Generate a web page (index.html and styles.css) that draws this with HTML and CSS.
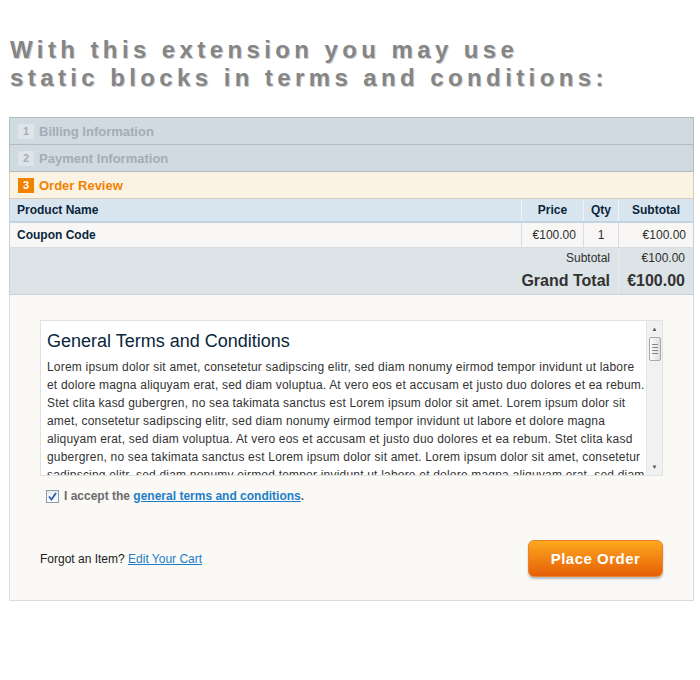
FILE: index.html
```html
<!DOCTYPE html>
<html lang="en">
<head>
  <meta charset="UTF-8" />
  <meta name="viewport" content="width=device-width, initial-scale=1.0"/>
  <title>Order Review</title>
  <link rel="stylesheet" href="styles.css">
</head>
<body>
  <div class="page">
    <h1 class="promo">With this extension you may use<br>static blocks in terms and conditions:</h1>

    <div class="checkout">
      <div class="step"><span class="step-num">1</span> Billing Information</div>
      <div class="step"><span class="step-num">2</span> Payment Information</div>
      <div class="step active"><span class="step-num">3</span> Order Review</div>

      <table class="review-table">
        <thead>
          <tr>
            <th class="col-name">Product Name</th>
            <th class="col-price">Price</th>
            <th class="col-qty">Qty</th>
            <th class="col-sub">Subtotal</th>
          </tr>
        </thead>
        <tbody>
          <tr>
            <td class="col-name"><strong>Coupon Code</strong></td>
            <td class="col-price">€100.00</td>
            <td class="col-qty">1</td>
            <td class="col-sub">€100.00</td>
          </tr>
        </tbody>
        <tfoot>
          <tr class="sub-row">
            <td colspan="3">Subtotal</td>
            <td>€100.00</td>
          </tr>
          <tr class="grand-row">
            <td colspan="3">Grand Total</td>
            <td>€100.00</td>
          </tr>
        </tfoot>
      </table>

      <div class="review-body">
        <div class="terms-box">
          <div class="terms-content">
            <h2>General Terms and Conditions</h2>
            <p>Lorem ipsum dolor sit amet, consetetur sadipscing elitr, sed diam nonumy eirmod tempor invidunt ut labore et dolore magna aliquyam erat, sed diam voluptua. At vero eos et accusam et justo duo dolores et ea rebum. Stet clita kasd gubergren, no sea takimata sanctus est Lorem ipsum dolor sit amet. Lorem ipsum dolor sit amet, consetetur sadipscing elitr, sed diam nonumy eirmod tempor invidunt ut labore et dolore magna aliquyam erat, sed diam voluptua. At vero eos et accusam et justo duo dolores et ea rebum. Stet clita kasd gubergren, no sea takimata sanctus est Lorem ipsum dolor sit amet. Lorem ipsum dolor sit amet, consetetur sadipscing elitr, sed diam nonumy eirmod tempor invidunt ut labore et dolore magna aliquyam erat, sed diam voluptua.</p>
          </div>
          <div class="scrollbar">
            <span class="arrow">&#9650;</span>
            <span class="thumb"><i></i><i></i><i></i><i></i></span>
            <span class="track"></span>
            <span class="arrow">&#9660;</span>
          </div>
        </div>

        <label class="agree">
          <span class="fake-check">
            <svg width="9" height="9" viewBox="0 0 9 9"><path d="M1 4.5 L3.5 7.5 L8 1" fill="none" stroke="#2b5fb4" stroke-width="1.8"/></svg>
          </span>
          <span class="agree-text">I accept the <a href="#">general terms and conditions</a>.</span>
        </label>

        <div class="review-footer">
          <p class="forgot">Forgot an Item? <a href="#">Edit Your Cart</a></p>
          <button class="place-order">Place Order</button>
        </div>
      </div>
    </div>
  </div>
</body>
</html>
```

FILE: styles.css
```css
:root {
  --step-bg: #d0dae1;
  --step-border: #b3bcc3;
  --step-text: #a4adb4;
  --active-bg: #faf2e3;
  --orange: #f18200;
  --head-bg: #d9e5ee;
  --navy: #0a263c;
  --row-bg: #f8f7f5;
  --cell-border: #d9dde3;
  --totals-bg: #dde4e7;
  --panel-bg: #faf9f6;
  --link: #1e7ec8;
}
body {
  margin: 0;
  font-family: 'Liberation Sans', Arial, sans-serif;
  font-size: 12px;
  color: #2f2f2f;
  background: #fff;
}
.page {
  padding: 36px 6px 0 9px;
}
.promo {
  margin: 0 0 25px 1px;
  font-size: 24px;
  line-height: 28px;
  font-weight: bold;
  letter-spacing: 4.4px;
  color: #858585;
  text-shadow: 1px 1px 0 #cfcfcf;
}
.checkout {
  width: 685px;
}
.step {
  display: flex;
  align-items: center;
  gap: 5px;
  height: 26px;
  padding-left: 8px;
  background: var(--step-bg);
  border: 1px solid var(--step-border);
  border-top: none;
  font-size: 13px;
  font-weight: bold;
  color: var(--step-text);
}
.step:first-child {
  border-top: 1px solid var(--step-border);
}
.step-num {
  display: inline-flex;
  align-items: center;
  justify-content: center;
  width: 16px;
  height: 15px;
  background: #dee5ea;
  font-size: 11px;
}
.step.active {
  background: var(--active-bg);
  border-color: #d6ccbb;
  color: var(--orange);
}
.step.active .step-num {
  background: var(--orange);
  color: #fff;
}
.review-table {
  width: 100%;
  border-collapse: collapse;
  border-left: 1px solid #c9d0d6;
  border-right: 1px solid #c9d0d6;
}
.review-table th {
  height: 22px;
  padding: 0 7px;
  background: var(--head-bg);
  color: var(--navy);
  font-weight: bold;
  text-align: left;
  border-bottom: 2px solid #c3d3df;
  border-left: 1px solid #eef3f7;
}
.review-table td {
  height: 24px;
  padding: 0 7px;
  background: var(--row-bg);
  border-left: 1px solid var(--cell-border);
  border-bottom: 1px solid var(--cell-border);
}
.review-table .col-name {
  border-left: none;
}
.review-table .col-price {
  width: 47px;
  text-align: right;
}
.review-table .col-qty {
  width: 20px;
  text-align: center;
}
.review-table .col-sub {
  width: 60px;
  text-align: right;
}
.review-table th.col-price,
.review-table th.col-sub {
  text-align: center;
}
.review-table td.col-name {
  color: var(--navy);
}
.review-table tfoot td {
  background: var(--totals-bg);
  text-align: right;
  border-bottom: none;
  border-left: 1px solid #e6ebee;
  padding: 0 8px;
}
.review-table tfoot td:first-child {
  border-left: none;
}
.sub-row td {
  height: 20px;
  padding-top: 1px;
}
.grand-row td {
  height: 26px;
  font-size: 16px;
  font-weight: bold;
  color: #333;
  vertical-align: middle;
  border-bottom: 1px solid #c9d0d6 !important;
}
.review-body {
  background: var(--panel-bg);
  border: 1px solid #d7dce0;
  border-top: none;
  padding: 25px 30px 23px 30px;
}
.terms-box {
  display: flex;
  height: 154px;
  background: #fff;
  border: 1px solid #e1e1e1;
}
.terms-content {
  flex: 1;
  overflow: hidden;
  padding: 9px 0 0 6px;
}
.terms-content h2 {
  margin: 0 0 6px;
  font-size: 18px;
  line-height: 22px;
  font-weight: normal;
  color: var(--navy);
}
.terms-content p {
  margin: 0;
  line-height: 18px;
  letter-spacing: 0.2px;
  color: #333;
}
.scrollbar {
  display: flex;
  flex-direction: column;
  align-items: center;
  width: 15px;
  background: #f1f1f1;
  border-left: 1px solid #e6e6e6;
}
.scrollbar .arrow {
  height: 16px;
  line-height: 16px;
  font-size: 6px;
  color: #555;
}
.scrollbar .thumb {
  display: flex;
  flex-direction: column;
  justify-content: center;
  align-items: center;
  gap: 2px;
  width: 12px;
  height: 24px;
  background: linear-gradient(to right, #fdfdfd, #dcdcdc);
  border: 1px solid #a9a9a9;
  border-radius: 2px;
  box-sizing: border-box;
}
.scrollbar .thumb i {
  display: block;
  width: 6px;
  height: 1px;
  background: #888;
}
.scrollbar .track {
  flex: 1;
}
.agree {
  display: flex;
  align-items: center;
  gap: 5px;
  margin: 13px 0 0 6px;
  font-weight: bold;
  color: #6b6b6b;
}
.agree a {
  color: var(--link);
  text-decoration: underline;
}
.fake-check {
  display: inline-flex;
  align-items: center;
  justify-content: center;
  width: 11px;
  height: 11px;
  border: 1px solid #8e9aa5;
  background: linear-gradient(#e6ebf0, #fff);
}
.review-footer {
  display: flex;
  justify-content: space-between;
  align-items: center;
  margin-top: 37px;
}
.forgot {
  margin: 0;
  color: #222;
}
.forgot a {
  color: var(--link);
}
.place-order {
  width: 135px;
  height: 37px;
  border: 1px solid #e8822c;
  border-radius: 6px;
  background: linear-gradient(#fea81e, #e65f07);
  color: #fff;
  font-family: 'Liberation Sans', Arial, sans-serif;
  font-size: 15px;
  font-weight: bold;
  letter-spacing: 0.5px;
  box-shadow: 0 2px 2px rgba(120, 140, 160, 0.55);
  cursor: pointer;
}
```
